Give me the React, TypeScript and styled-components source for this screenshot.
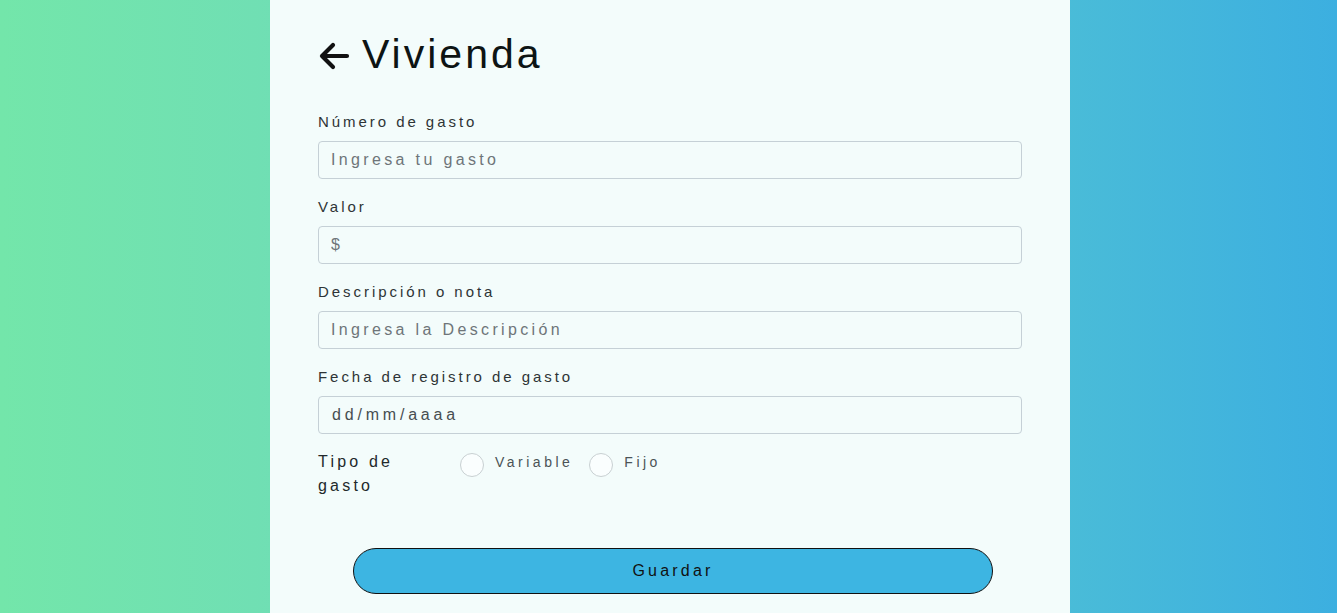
import React from "react";
import styled, { createGlobalStyle } from "styled-components";

const Global = createGlobalStyle`
  html, body { margin: 0; padding: 0; }
  body {
    font-family: "Liberation Sans", Arial, sans-serif;
    background: linear-gradient(90deg, #73e6aa 0%, #6fddb6 25%, #50c2d4 70%, #3cafe0 100%);
    min-height: 100vh;
  }
`;

const Page = styled.div`
  display: flex;
  justify-content: center;
  min-height: 100vh;
  padding-left: 3px;
`;

const Panel = styled.main`
  width: 800px;
  box-sizing: border-box;
  background: #f3fcfb;
  padding: 29px 48px 40px;
`;

const Header = styled.div`
  display: flex;
  align-items: center;
  gap: 12px;
  margin-bottom: 34px;
`;

const Title = styled.h1`
  margin: 0;
  font-weight: 400;
  font-size: 41px;
  letter-spacing: 3px;
  color: #0d1414;
  line-height: 50px;
`;

const BackButton = styled.button`
  border: 0;
  background: none;
  padding: 0;
  display: flex;
  margin-top: 4px;
  cursor: pointer;
`;

const Field = styled.div`
  display: flex;
  flex-direction: column;
  margin-bottom: 19px;
`;

const Label = styled.label`
  font-size: 15px;
  letter-spacing: 2.95px;
  color: #2e3436;
  line-height: 18px;
  margin-bottom: 10px;
`;

const Input = styled.input`
  box-sizing: border-box;
  height: 38px;
  width: 100%;
  border: 1px solid #c5d0d6;
  border-radius: 4px;
  background: #f3fcfb;
  padding: 0 12px;
  font-family: "Liberation Sans", Arial, sans-serif;
  font-size: 16px;
  letter-spacing: 3.35px;
  color: #333;
  &::placeholder { color: #6e7579; }
`;

const DateInput = styled(Input)`
  padding-left: 13px;
  letter-spacing: 3.8px;
  &::placeholder { color: #474e51; }
`;

const TypeRow = styled.div`
  display: flex;
  align-items: flex-start;
  margin-top: 1px;
`;

const TypeLabel = styled.span`
  width: 120px;
  font-size: 16px;
  letter-spacing: 3.2px;
  line-height: 24px;
  color: #22292b;
  margin: -3px 22px 0 0;
`;

const Option = styled.label`
  display: flex;
  align-items: flex-start;
  gap: 11px;
  margin-right: 16px;
  font-size: 14px;
  letter-spacing: 3.5px;
  color: #4b5356;
  line-height: 18px;
`;

const Radio = styled.span`
  width: 24px;
  height: 24px;
  box-sizing: border-box;
  border: 1px solid #c8d0d2;
  border-radius: 50%;
  background: #fafefe;
  margin-top: 0;
`;

const Save = styled.button`
  display: block;
  width: 640px;
  height: 46px;
  margin: 50px 0 0 35px;
  border: 1px solid #111;
  border-radius: 23px;
  background: #3db5e2;
  font-family: "Liberation Sans", Arial, sans-serif;
  font-size: 16px;
  letter-spacing: 3.2px;
  color: #111;
  cursor: pointer;
`;

const Arrow = () => (
  <svg width="32" height="28" viewBox="0 0 32 28" fill="none">
    <path d="M29 14H4M15 3L4 14L15 25" stroke="#111" strokeWidth="4.2" strokeLinecap="round" strokeLinejoin="round" />
  </svg>
);

export default function App() {
  return (
    <Page>
      <Global />
      <Panel>
        <Header>
          <BackButton aria-label="Volver"><Arrow /></BackButton>
          <Title>Vivienda</Title>
        </Header>
        <Field>
          <Label>Número de gasto</Label>
          <Input placeholder="Ingresa tu gasto" />
        </Field>
        <Field>
          <Label>Valor</Label>
          <Input placeholder="$" />
        </Field>
        <Field>
          <Label>Descripción o nota</Label>
          <Input placeholder="Ingresa la Descripción" />
        </Field>
        <Field>
          <Label>Fecha de registro de gasto</Label>
          <DateInput placeholder="dd/mm/aaaa" />
        </Field>
        <TypeRow>
          <TypeLabel>Tipo de gasto</TypeLabel>
          <Option><Radio />Variable</Option>
          <Option><Radio />Fijo</Option>
        </TypeRow>
        <Save>Guardar</Save>
      </Panel>
    </Page>
  );
}
